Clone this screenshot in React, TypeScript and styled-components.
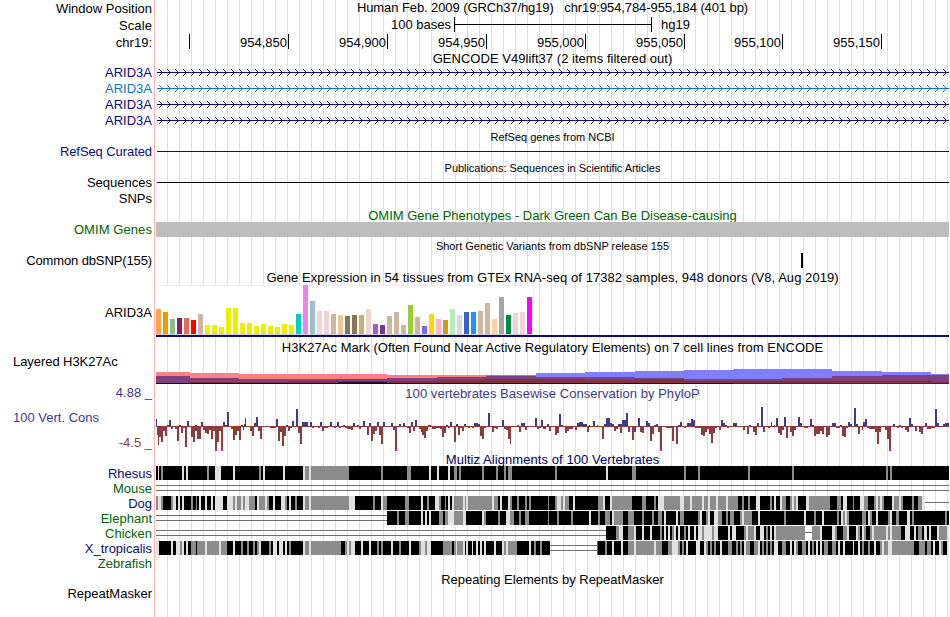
import React from 'react';
import styled, { createGlobalStyle } from 'styled-components';


const NAVY = '#0c0c78';
const GREEN = '#006400';
const PLOT_WIDTH = 793;

const GlobalStyle = createGlobalStyle`
    body {
        margin: 0;
        background: white;
        overflow: hidden;
    }
`
const Browser = styled.main`
    width: 950px;
    height: 617px;
    overflow: hidden;
    color: black;
    font-family: "Liberation Sans", Arial, sans-serif;
    font-size: 13px;
    white-space: pre;
    background:
        linear-gradient(#ffb4b4, #ffb4b4) 154px 0 / 1px 100% no-repeat,
        repeating-linear-gradient(90deg, #dcdcf8 0 1px, transparent 1px 12px) 167px 0 / 782px 100% no-repeat,
        white;
`
const Row = styled.div<{ $h: number }>`
    display: grid;
    grid-template-columns: 152px ${PLOT_WIDTH}px;
    column-gap: 4px;
    height: ${p => p.$h}px;
    line-height: ${p => p.$h}px;
`
const Label = styled.div<{ $color?: string; $left?: boolean; $line?: number; $spacing?: number }>`
    text-align: ${p => (p.$left ? 'left' : 'right')};
    padding-left: ${p => (p.$left ? 13 : 0)}px;
    color: ${p => p.$color || 'black'};
    letter-spacing: ${p => p.$spacing || 0}px;
    ${p => p.$line && `line-height: ${p.$line}px;`}
`
const Title = styled.div<{ $color?: string; $small?: boolean; $spacing?: number; $line?: number }>`
    text-align: center;
    color: ${p => p.$color || 'black'};
    font-size: ${p => (p.$small ? 11 : 13)}px;
    letter-spacing: ${p => p.$spacing || 0}px;
    ${p => p.$line && `line-height: ${p.$line}px;`}
`
const Plot = styled.svg`
    display: block;
    width: ${PLOT_WIDTH}px;
    height: 100%;
    shape-rendering: crispEdges;
`
const Scale = styled.div`
    display: flex;
    line-height: 15px;
`
const ScaleText = styled.span`
    width: 295px;
    text-align: right;
`
const ScaleBar = styled.div`
    width: 196px;
    height: 15px;
    margin: 0 9px 0 3px;
    border: solid black;
    border-width: 0 1px;
    background: linear-gradient(black, black) 0 7px / 100% 1px no-repeat;
`
const Ruler = styled.div`
    display: flex;
    height: 15px;
`
const Tick = styled.div<{ $w: number }>`
    box-sizing: border-box;
    width: ${p => p.$w}px;
    padding-right: 1px;
    border-right: 1px solid black;
    text-align: right;
`
const Bar = styled.div`
    height: 15px;
    background: #bebebe;
`
const Variant = styled.div`
    width: 2px;
    height: 15px;
    margin-left: 645px;
    background: black;
`
const Expression = styled.div`
    display: flex;
    flex-direction: column;
    border-bottom: 2px solid ${NAVY};
    height: 50px;
`
const Tissues = styled.div`
    box-sizing: border-box;
    display: flex;
    align-items: flex-end;
    gap: 2px;
    width: 378px;
    height: 50px;
    background:
        linear-gradient(#d2d2d2, #d2d2d2) 0 100% / 100% 1px no-repeat,
        linear-gradient(#eee, #eee) 0 0 / 100% 1px no-repeat,
        linear-gradient(#eee, #eee) 100% 0 / 1px 100% no-repeat,
        white;
    padding-bottom: 1px;
`
const Tissue = styled.div<{ $h: number; $color: string }>`
    width: 5px;
    height: ${p => p.$h}px;
    background: ${p => p.$color};
`


// [height, color] per GTEx tissue
const TISSUES: [number, string][] = [
    [25, '#ffa54f'], [22, '#ee9a00'], [15, '#8fbc8f'], [16, '#8b1c62'], [16, '#ee6a50'], [14, '#ff0000'], [20, '#cdb79e'],
    [9, '#eeee00'], [9, '#eeee00'], [7, '#eeee00'], [26, '#eeee00'], [26, '#eeee00'], [11, '#eeee00'], [11, '#eeee00'],
    [8, '#eeee00'], [10, '#eeee00'], [8, '#eeee00'], [7, '#eeee00'], [10, '#eeee00'], [9, '#eeee00'],
    [20, '#00cdcd'], [49, '#ee82ee'], [33, '#9ac0cd'], [23, '#eed5d2'], [23, '#eed5d2'], [20, '#cdb79e'], [19, '#eec591'],
    [18, '#8b7355'], [19, '#8b7355'], [19, '#cdaa7d'], [25, '#eed5d2'], [10, '#b452cd'], [9, '#7a378b'], [18, '#cdb79e'],
    [22, '#cdb79e'], [9, '#cdb79e'], [29, '#9acd32'], [17, '#cdb79e'], [8, '#7a67ee'], [20, '#ffd700'], [15, '#ffb6c1'],
    [14, '#cd9b1d'], [25, '#b4eeb4'], [19, '#d9d9d9'], [22, '#3a5fcd'], [22, '#1e90ff'], [23, '#cdb79e'], [31, '#cdb79e'],
    [15, '#ffd39b'], [37, '#a6a6a6'], [19, '#008b45'], [21, '#eed5d2'], [22, '#eed5d2'], [37, '#ff00ff'],
];

// each layer is a step function: x, height above the floor, x, height, ...
const H3K27AC: { color: string; steps: number[] }[] = [
    { color: '#ff8080', steps: [0, 11, 34, 10, 83, 9, 231, 8, 330, 0] },
    { color: '#8080ff', steps: [330, 8, 380, 10, 429, 11, 479, 12, 528, 13, 577, 14, 676, 12, 726, 11, 775, 9] },
    { color: '#804080', steps: [0, 7, 34, 5, 83, 4, 231, 5, 281, 6, 330, 7, 380, 6, 479, 5, 528, 4, 626, 5, 676, 7, 726, 8] },
    { color: '#80303f', steps: [34, 1, 132, 2, 281, 3, 330, 4, 429, 3, 479, 4, 528, 2, 577, 2, 626, 2, 775, 1] },
    { color: '#280a28', steps: [0, 0, 182, 1, 231, 0] },
];

// x, width, height triples; negative heights hang below the axis
const CONSERVATION = `
0 1 7,1 1 -9,2 1 -19,3 2 -11,5 2 -16,7 2 -5,9 2 -10,11 2 1,13 2 6,15 2 -3,19 2 -3,21 2 -15,23 2 1,25 2 -7,27 2 -2,29 2 -21,
31 2 5,35 2 -11,37 2 -16,39 2 -5,39 2 1,41 4 -13,45 2 4,47 2 -4,49 2 -7,51 2 -8,53 2 -4,55 2 -13,57 2 -5,59 2 -25,61 2 -16,
63 2 -5,65 2 -25,67 2 4,69 2 1,71 2 14,75 2 -3,77 2 -14,79 2 -9,81 2 -5,83 2 -14,85 2 1,87 1 -4,88 1 2,89 1 8,94 2 -5,
96 2 -10,98 2 3,100 2 9,102 2 -5,104 2 -13,114 6 -2,120 2 7,122 2 -15,124 2 -6,126 2 -20,128 2 -10,130 2 1,132 2 -5,
134 2 -2,136 2 5,140 2 17,142 2 -7,144 2 -18,146 6 4,154 2 4,156 2 -2,162 2 -2,164 2 4,166 2 -5,168 4 -2,174 2 4,178 2 -2,
181 2 4,183 2 -2,187 2 1,189 2 -2,191 4 -3,195 2 -4,197 2 3,201 2 1,203 2 -3,207 2 5,211 2 -9,213 2 3,215 2 -15,217 2 -8,
219 2 -5,221 2 4,223 2 -9,225 2 -18,227 2 4,235 2 3,237 2 -4,239 2 -25,243 2 2,247 2 3,251 2 -2,253 2 -7,255 2 4,257 2 -5,
259 2 6,263 2 -3,265 2 -6,266 2 -9,268 2 -12,270 2 -5,272 3 1,276 4 -3,280 4 -2,284 2 -3,286 2 -11,288 2 -7,290 2 1,
292 2 -2,294 2 4,298 2 -16,300 2 2,302 2 -9,304 2 -2,306 2 -5,308 2 2,312 2 -2,316 2 -2,318 4 3,322 2 2,324 2 -10,326 2 -13,
328 2 -2,332 2 13,336 2 -6,338 2 -2,340 2 -3,346 2 6,348 2 -3,350 2 -4,352 2 -13,354 1 -18,361 2 1,363 2 -6,365 4 3,
369 2 -4,379 2 8,381 2 -3,383 2 -2,385 2 6,387 3 -3,391 2 2,393 2 -5,399 2 -9,401 2 -7,403 2 12,405 2 1,409 2 -7,411 2 -5,
413 4 -3,419 2 -4,421 2 3,423 4 4,427 4 2,431 2 -6,433 1 1,437 2 5,441 1 1,446 2 -13,448 2 2,450 4 8,454 2 3,456 2 2,
458 2 -5,460 2 -3,462 4 2,464 2 -7,466 4 6,470 2 13,472 2 -6,476 2 -14,478 2 -6,482 2 8,484 2 -6,486 2 -7,490 2 5,492 2 3,
494 2 -15,496 2 -8,498 4 1,500 2 2,502 2 -6,504 2 -25,510 6 -2,516 2 -15,520 2 -18,522 2 1,524 2 4,528 2 -2,531 4 3,535 2 7,
537 2 6,539 6 -2,545 2 -9,547 2 -10,549 2 -6,551 2 -3,553 2 -8,555 2 -17,557 2 -7,559 2 -2,563 2 -4,565 2 6,567 2 3,
569 2 1,571 2 -2,577 4 3,587 2 -4,591 2 -8,593 2 1,597 2 -6,599 2 -9,601 2 3,605 2 19,607 2 -6,612 2 -2,615 1 4,618 1 1,
620 2 8,622 2 -7,624 2 -9,626 2 -4,628 2 9,630 2 -12,634 2 -6,636 2 -10,638 2 -4,642 2 9,644 2 3,648 4 -2,654 2 7,656 2 1,
658 2 -10,660 4 -8,664 2 -5,666 2 -8,670 2 -11,672 2 -9,676 4 3,680 4 -2,684 2 1,686 2 -10,688 2 -11,690 2 -2,692 2 4,
694 2 2,698 2 18,700 2 2,702 2 -8,706 1 -4,707 2 4,709 2 7,711 2 -2,713 6 -3,719 2 -6,721 2 -18,723 2 -6,729 2 -4,
731 2 -13,733 2 -25,737 2 2,741 2 -2,743 2 1,745 2 -2,749 2 -4,751 2 -6,753 2 8,755 2 2,759 2 -5,763 2 -6,765 2 -8,
769 2 3,771 4 -3,775 4 -2,779 2 17,781 2 3,787 2 2,789 4 3`
    .split(',')
    .map(s => s.trim().split(' ').map(Number));

// runs written as <shade><start x>: k = conserved, g = partial, w = weak, d = double line, s = single line, x = nothing, v = break
const SPECIES: { name: string; color: string; runs: string }[] = [
    {
        name: 'Rhesus', color: NAVY,
        runs: `k0 w2 k3 g5 k7 w26 k28 w30 k32 g51 k53 w59 k65 w77 k79 g103 k105 w107 k109 w127 k129 w147 g149 w153 g155 k193 g225
            k227 g251 k255 w273 k275 w281 k283 w292 k294 g298 k301 g303 k305 g326 k328 g340 k342 g348 k350 g352 k356 g399 k401
            w450 k452 g476 k480 g528 k530 g542 k544 g592 k594 g636 k638 g730 k732 g734 k736`,
    },
    { name: 'Mouse', color: GREEN, runs: 'd0' },
    {
        name: 'Dog', color: NAVY,
        runs: `g0 w2 g5 k7 g15 w17 k20 w22 k24 w26 k28 g35 k37 g40 k41 w43 k45 w49 k51 w55 k57 w59 k67 w71 g77 w79 g81 w85 g87
            w89 g93 k99 w101 g103 w109 g111 k113 w117 k119 w125 g129 k131 w133 k135 g139 k141 w147 g149 w153 g155 w193 k199
            g217 k219 w225 g227 k231 g249 k253 w265 k267 g271 k273 w279 g283 k285 g289 k290 w292 k294 w296 g298 w307 g309
            w310 g312 w336 g338 k342 w344 k346 w352 g354 k356 g361 k363 g369 k371 g373 k375 g392 k393 g399 w401 g405 w407
            g409 k413 w417 k419 g442 w447 k449 w454 g456 k476 g486 k490 g498 k500 w502 w504 g508 w524 g528 w534 g536 w546
            g548 w552 g554 w560 g562 w570 g572 k582 g586 k588 g592 k594 w600 k604 g614 k616 w618 k620 w624 g626 k630 g634
            w636 g638 w640 k642 w650 g653 k674 g681 k685 w687 k691 g697 k698 w704 g708 k712 g718 w720 g722 w724 g726 k728
            w736 g738 w743 g745 k747 g756 k758 g762 w766 s769`,
    },
    {
        name: 'Elephant', color: GREEN,
        runs: `d0 k231 g241 k243 g249 k253 w265 k267 w269 k271 w273 k275 g283 k287 g289 w292 g298 w307 k310 w326 g328 k330 g342
            k344 w350 g354 k358 g363 k365 g369 k373 g392 k393 g401 k403 g415 k417 w433 k435 g442 k444 g449 k454 w456 g458
            k467 g472 k478 g486 k488 g496 k498 g502 k506 w508 k510 w520 k522 g524 k526 g526 k528 g542 w544 k546 g550 w552
            k554 w558 g562 k566 g570 k572 g574 k578 g584 w586 g588 k596 w602 k604 g628 k630 w648 k650 g658 k660 w666 k668
            g681 k683 w685 g687 w689 g691 k693 g706 k710 w712 g714 k716 w720 k722 g732 w734 k736 g740 k743 w751 k754 g756
            k758 g789 k791`,
    },
    {
        name: 'Chicken', color: GREEN,
        runs: `d0 k450 g460 w463 k467 g472 w478 k480 w486 k488 w494 k496 g504 k506 w508 k510 w512 k514 g516 w518 k520 w522 k524
            g528 k530 w532 k534 w538 k540 w542 g546 w548 g556 w558 k562 w572 k574 w576 k580 g588 w590 g592 w598 k600 w604
            k608 g610 k612 w614 k616 w618 g620 s649 g656 w664 k666 w676 g679 k681 g687 w691 k693 w700 g702 k704 w706 g708
            k710 g714 w716 g718 w730 g732 w734 g736 k745 w749 k754 w758 k760 g762 k766 w768 k771 w773 k775 w781 g783 w791`,
    },
    {
        name: 'X_tropicalis', color: NAVY,
        runs: `w0 k3 w15 k17 w20 g24 w26 k28 w30 k32 g35 k40 g41 w49 g51 w63 g65 k71 w77 k79 g85 k87 g91 k93 g97 k99 g101 w103
            k105 g113 k115 w117 k121 w123 k127 w129 k131 g133 k135 w147 g149 w153 g155 k185 g189 w191 g193 w195 k199 w205
            k207 w213 k215 g221 k223 g225 k227 w235 k237 g243 k245 w253 k255 g263 w265 g269 w271 k275 g287 k296 g298 w300
            g301 w307 k309 w310 k312 w316 k317 w320 k322 w324 k326 w328 k330 w338 k340 w346 g348 w350 g352 k361 w373 k375
            g378 k380 g384 k386 d394 v441 k442 g449 k451 w456 k458 w465 k467 g472 w478 g480 w498 g500 k506 g512 w516 g522
            k524 g526 k528 w530 k532 w540 k544 w548 g550 k552 g554 k556 g558 k560 w564 k566 g572 k576 g580 k582 g584 k586
            w588 g590 k594 g598 w602 k604 g606 k608 g610 k612 g614 k616 w618 k622 g626 k630 w634 k636 w638 g640 k642 g646
            k650 w652 k654 g656 k658 w660 k662 w664 k666 g668 k672 g676 k680 w682 k684 w687 k689 w697 k698 w702 k704 g706
            k708 g712 k714 w718 k720 g724 w726 g728 w732 g736 k758 g763 k769 g771 k775 w777 k779 w783 g785 k787 w791`,
    },
    { name: 'Zebrafish', color: GREEN, runs: 'x0' },
];

const SHADES: Record<string, string> = { k: '#000000', g: '#8c8c8c', w: '#e1e1e1', v: '#00b400' };


const GeneLine: React.FC<{ color: string }> = ({ color }) => {
    const arrows: number[] = [];
    for (let x = 6; x < PLOT_WIDTH; x += 8) {
        arrows.push(x);
    }
    return (
        <Plot>
            <rect x={1} y={7} width={792} height={1} fill={color} />
            <path
                d={arrows.map(x => `M${x - 3} 4L${x + 0.5} 7.5L${x - 3} 11`).join('')}
                fill="none"
                stroke={color}
                strokeWidth={0.9}
                style={{ shapeRendering: 'geometricPrecision' }}
            />
        </Plot>
    );
};

const Histone: React.FC = () => (
    <Plot>
        {H3K27AC.map(({ color, steps }) => {
            const rects: React.ReactNode[] = [];
            for (let i = 0; i < steps.length; i += 2) {
                const end = i + 2 < steps.length ? steps[i + 2] : PLOT_WIDTH;
                rects.push(<rect key={i} x={steps[i]} y={28 - steps[i + 1]} width={end - steps[i]} height={steps[i + 1]} fill={color} />);
            }
            return <g key={color}>{rects}</g>;
        })}
        <rect x={0} y={28} width={577} height={1} fill="#200820" />
        <rect x={577} y={28} width={216} height={1} fill="#701028" />
    </Plot>
);

const Conservation: React.FC = () => (
    <Plot>
        <rect x={0} y={25} width={PLOT_WIDTH} height={1} fill="#8c3c3c" />
        {CONSERVATION.map(([x, w, h], i) => (
            <g key={i}>
                <rect x={x} y={h > 0 ? 26 - h - 1 : 25} width={w} height={Math.abs(h)} fill={h > 0 ? '#3c3c8c' : '#8c3c3c'} />
                {h === -25 ? <rect x={x} y={48} width={w} height={2} fill="#ff00ff" /> : null}
            </g>
        ))}
    </Plot>
);

const Alignment: React.FC<{ runs: string }> = ({ runs }) => {
    const parts = runs.split(/\s+/).map(r => ({ kind: r[0], x: Number(r.slice(1)) }));
    return (
        <Plot>
            {parts.map(({ kind, x }, i) => {
                const w = (i + 1 < parts.length ? parts[i + 1].x : PLOT_WIDTH) - x;
                if (kind === 'x') {
                    return null;
                }
                if (kind === 's') {
                    return <rect key={i} x={x} y={6} width={w} height={1} fill="#707070" />;
                }
                if (kind === 'd') {
                    return <path key={i} d={`M${x} 4h${w}v1h-${w}zM${x} 9h${w}v1h-${w}z`} fill="#707070" />;
                }
                return <rect key={i} x={x} y={0} width={w} height={14} fill={SHADES[kind]} />;
            })}
        </Plot>
    );
};

interface TitleRowProps {
    h: number;
    line?: number;
    color?: string;
    small?: boolean;
    spacing?: number;
    children: React.ReactNode;
}

const TitleRow: React.FC<TitleRowProps> = ({ h, line, color, small, spacing, children }) => (
    <Row $h={h}>
        <Label />
        <Title $color={color} $small={small} $spacing={spacing} $line={line || h + 2}>{children}</Title>
    </Row>
);

const TICKS: [number, string][] = [
    [34, ''], [99, '954,850'], [99, '954,900'], [99, '954,950'], [99, '955,000'], [99, '955,050'], [98, '955,100'], [99, '955,150'],
];

const App: React.FC = () => {
    return (
        <Browser>
            <GlobalStyle />
            <Row $h={17}>
                <Label>Window Position</Label>
                <Title $line={15} $spacing={-0.09}>Human Feb. 2009 (GRCh37/hg19)   chr19:954,784-955,184 (401 bp)</Title>
            </Row>
            <Row $h={17}>
                <Label $spacing={0.1}>Scale</Label>
                <Scale>
                    <ScaleText>100 bases</ScaleText>
                    <ScaleBar />
                    <span>hg19</span>
                </Scale>
            </Row>
            <Row $h={17}>
                <Label>chr19:</Label>
                <Ruler>
                    {TICKS.map(([w, text], i) => <Tick key={i} $w={w}>{text}</Tick>)}
                </Ruler>
            </Row>
            <TitleRow h={14} spacing={0.03}>GENCODE V49lift37 (2 items filtered out)</TitleRow>
            {[NAVY, '#0c78b4', NAVY, NAVY].map((color, i) => (
                <Row $h={16} key={i}>
                    <Label $color={color}>ARID3A</Label>
                    <GeneLine color={color} />
                </Row>
            ))}
            <TitleRow h={15} small>RefSeq genes from NCBI</TitleRow>
            <Row $h={16}>
                <Label $color={NAVY} $spacing={-0.08}>RefSeq Curated</Label>
                <Plot><rect x={1} y={7} width={792} height={1} fill={NAVY} /></Plot>
            </Row>
            <TitleRow h={15} small spacing={-0.04}>Publications: Sequences in Scientific Articles</TitleRow>
            <Row $h={16}>
                <Label>Sequences</Label>
                <Plot><rect x={1} y={7} width={792} height={1} fill="black" /></Plot>
            </Row>
            <Row $h={16}>
                <Label>SNPs</Label>
            </Row>
            <TitleRow h={15} color={GREEN}>OMIM Gene Phenotypes - Dark Green Can Be Disease-causing</TitleRow>
            <Row $h={16}>
                <Label $color={GREEN} $spacing={0.08}>OMIM Genes</Label>
                <Bar />
            </Row>
            <TitleRow h={15} small>Short Genetic Variants from dbSNP release 155</TitleRow>
            <Row $h={16}>
                <Label $spacing={-0.12}>Common dbSNP(155)</Label>
                <Variant />
            </Row>
            <TitleRow h={16} spacing={0.055}>Gene Expression in 54 tissues from GTEx RNA-seq of 17382 samples, 948 donors (V8, Aug 2019)</TitleRow>
            <Row $h={55}>
                <Label>ARID3A</Label>
                <Expression>
                    <Tissues>
                        {TISSUES.map(([h, color], i) => <Tissue key={i} $h={h} $color={color} />)}
                    </Tissues>
                </Expression>
            </Row>
            <TitleRow h={15} line={15} spacing={0.045}>H3K27Ac Mark (Often Found Near Active Regulatory Elements) on 7 cell lines from ENCODE</TitleRow>
            <Row $h={30}>
                <Label $left $line={14} $spacing={-0.06}>Layered H3K27Ac</Label>
                <Histone />
            </Row>
            <Row $h={16}>
                <Label $color="#3c3c8c">4.88 _</Label>
                <Title $color="#3c3c8c" $line={18} $spacing={0.05}>100 vertebrates Basewise Conservation by PhyloP</Title>
            </Row>
            <Row $h={50}>
                <div>
                    <Label $left $color="#3c3c8c" $line={34}>100 Vert. Cons</Label>
                    <Label $color="#8c3c3c" $line={16}>-4.5 _</Label>
                </div>
                <Conservation />
            </Row>
            <TitleRow h={15} color="#000064" spacing={0.07}>Multiz Alignments of 100 Vertebrates</TitleRow>
            {SPECIES.map(({ name, color, runs }) => (
                <Row $h={15} key={name}>
                    <Label $color={color}>{name}</Label>
                    <Alignment runs={runs} />
                </Row>
            ))}
            <TitleRow h={15}>Repeating Elements by RepeatMasker</TitleRow>
            <Row $h={15}>
                <Label>RepeatMasker</Label>
            </Row>
        </Browser>
    );
};

export default App;
